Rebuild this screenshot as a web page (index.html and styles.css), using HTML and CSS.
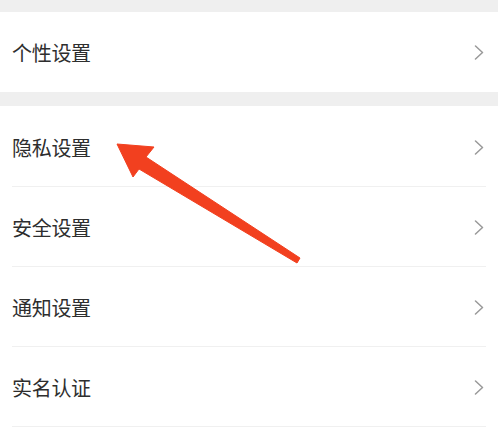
FILE: index.html
```html
<!DOCTYPE html>
<html lang="zh-CN">
<head>
<meta charset="utf-8">
<title>设置</title>
<link rel="stylesheet" href="styles.css">
</head>
<body>
<div class="page">
  <div class="spacer-top"></div>
  <div class="group">
    <div class="row"><span class="label">个性设置</span><svg class="chev" viewBox="0 0 10 15"><path d="M1.5 1 L8.5 7.5 L1.5 14" /></svg></div>
  </div>
  <div class="spacer"></div>
  <div class="group group-fill">
    <div class="row line"><span class="label">隐私设置</span><svg class="chev" viewBox="0 0 10 15"><path d="M1.5 1 L8.5 7.5 L1.5 14" /></svg></div>
    <div class="row line"><span class="label">安全设置</span><svg class="chev" viewBox="0 0 10 15"><path d="M1.5 1 L8.5 7.5 L1.5 14" /></svg></div>
    <div class="row line"><span class="label">通知设置</span><svg class="chev" viewBox="0 0 10 15"><path d="M1.5 1 L8.5 7.5 L1.5 14" /></svg></div>
    <div class="row line"><span class="label">实名认证</span><svg class="chev" viewBox="0 0 10 15"><path d="M1.5 1 L8.5 7.5 L1.5 14" /></svg></div>
  </div>
  <svg class="arrow" viewBox="0 0 498 434" width="498" height="434">
    <polygon points="117,144 154,147 146,157 300,258 297,263 139,169 133,177" />
  </svg>
</div>
</body>
</html>
```
FILE: styles.css
```css
html, body {
  margin: 0;
  padding: 0;
  background: #efefef;
}
.page {
  position: relative;
  width: 498px;
  height: 434px;
  overflow: hidden;
  display: flex;
  flex-direction: column;
  font-family: "Noto Sans CJK SC", "Noto Sans", sans-serif;
}
.spacer-top {
  height: 12px;
  flex: none;
}
.spacer {
  height: 14px;
  flex: none;
}
.group {
  background: #ffffff;
  display: flex;
  flex-direction: column;
  flex: none;
}
.group-fill {
  flex: 1;
  padding-top: 1px;
}
.row {
  position: relative;
  height: 80px;
  flex: none;
  box-sizing: border-box;
  display: flex;
  align-items: center;
  justify-content: space-between;
  padding: 0 14px 0 12px;
}
.row.line::after {
  content: "";
  position: absolute;
  left: 12px;
  right: 12px;
  bottom: 0;
  height: 1px;
  background: #f0f0f0;
}
.label {
  font-size: 20px;
  color: #2e2e2e;
  letter-spacing: -0.3px;
}
.chev {
  width: 10px;
  height: 15px;
  fill: none;
  stroke: #999999;
  stroke-width: 1.5;
  stroke-linecap: round;
  stroke-linejoin: round;
}
.arrow {
  position: absolute;
  left: 0;
  top: 0;
  pointer-events: none;
}
.arrow polygon {
  fill: #f2401f;
  stroke: #f2401f;
  stroke-width: 1;
  stroke-linejoin: round;
}
```
